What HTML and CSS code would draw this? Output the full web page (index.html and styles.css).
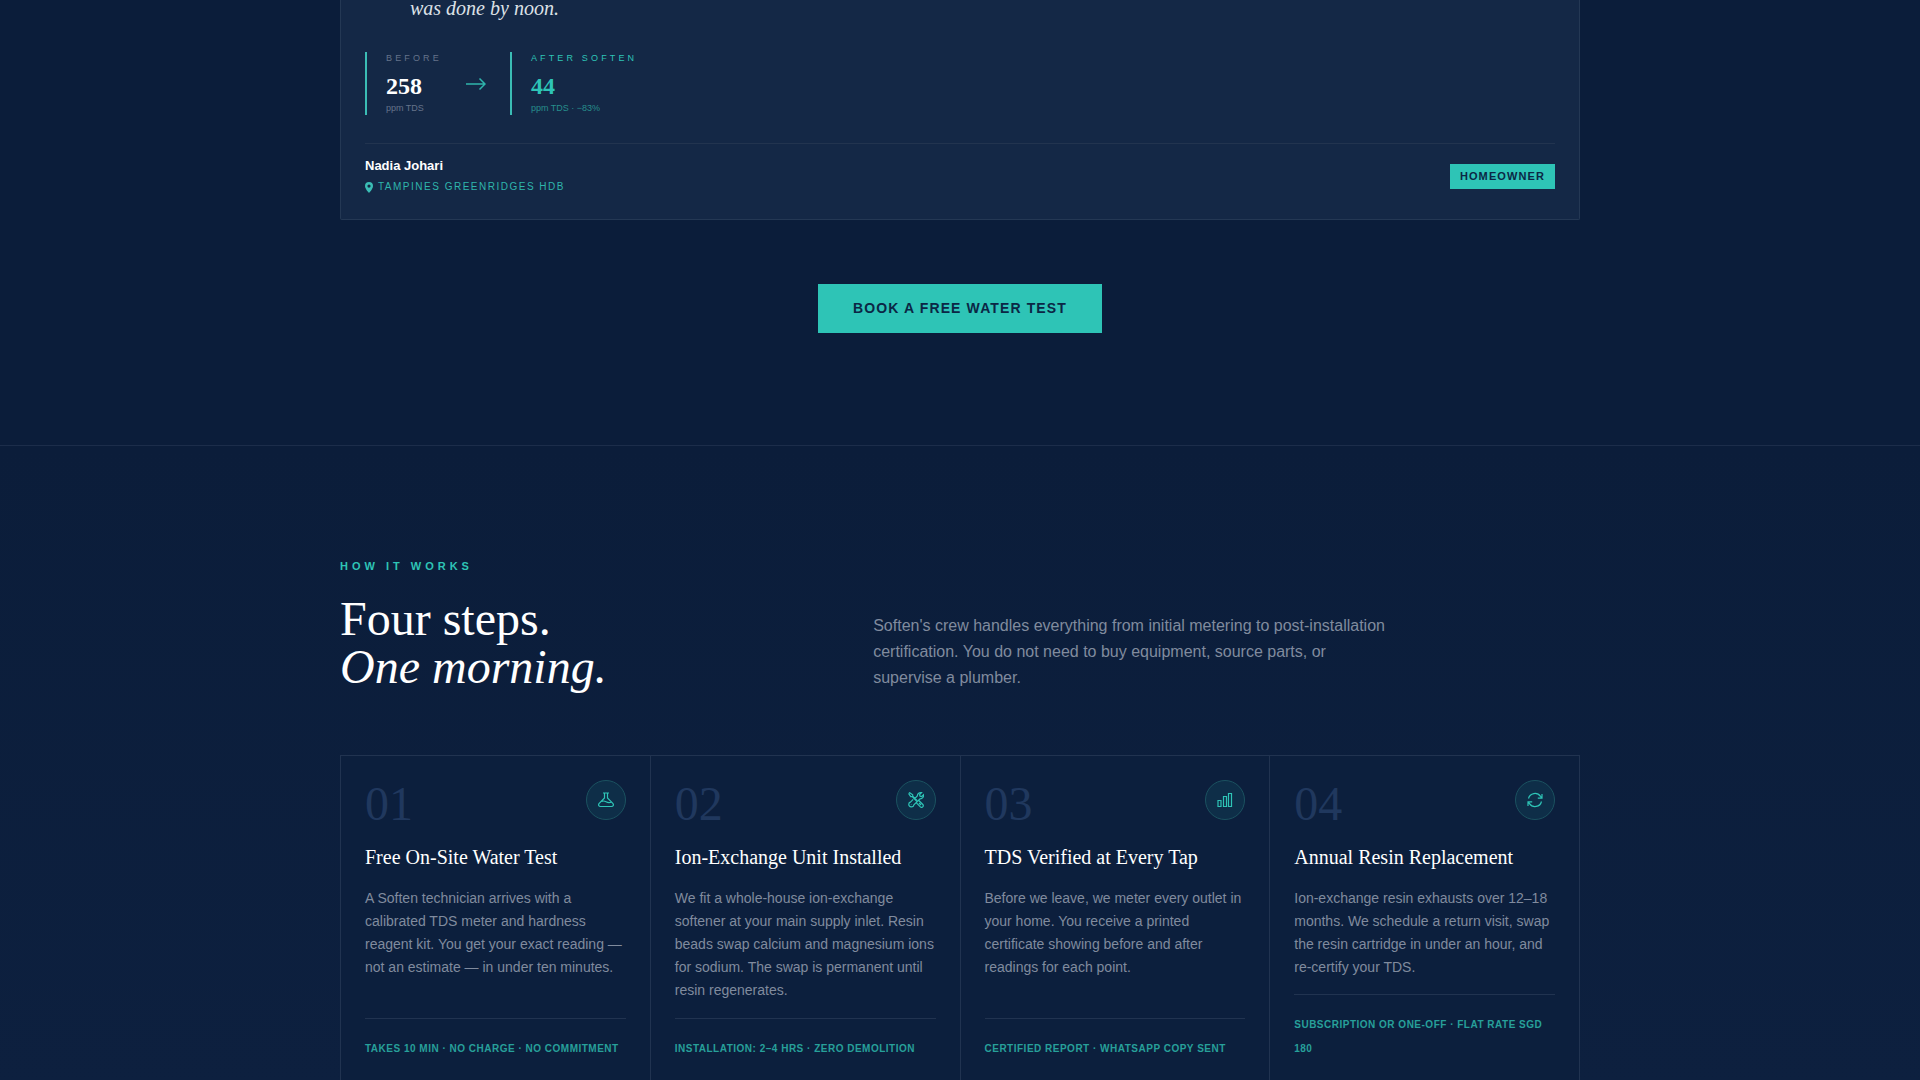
FILE: index.html
```html
<!DOCTYPE html>
<html lang="en">
<head>
    <meta charset="UTF-8">
    <meta name="viewport" content="width=device-width, initial-scale=1.0">
    <title>Soften</title>
    <link rel="stylesheet" href="styles.css">
</head>
<body>
<main class="page">
    <section class="reviews">
        <div class="container">
            <article class="review-card">
                <p class="quote">was done by noon.</p>
                <div class="readings">
                    <div class="reading">
                        <span class="reading-label">Before</span>
                        <span class="reading-value">258</span>
                        <span class="reading-unit">ppm TDS</span>
                    </div>
                    <svg class="arrow" width="20" height="20" viewBox="0 0 20 20"><path d="M0 10h19M13.5 4.500l5.500 5.500-5.500 5.500"/></svg>
                    <div class="reading after">
                        <span class="reading-label">After Soften</span>
                        <span class="reading-value">44</span>
                        <span class="reading-unit">ppm TDS · −83%</span>
                    </div>
                </div>
                <footer class="review-footer">
                    <div>
                        <div class="name">Nadia Johari</div>
                        <div class="place">
                            <svg width="8" height="11" viewBox="0 0 8 11"><path fill-rule="evenodd" d="M4 11S8 7 8 4A4 4 0 0 0 0 4c0 3 4 7 4 7zm0-5.300a1.600 1.600 0 1 1 0-3.200 1.600 1.600 0 0 1 0 3.200z"/></svg>
                            Tampines Greenridges HDB
                        </div>
                    </div>
                    <span class="tag">Homeowner</span>
                </footer>
            </article>
            <div class="cta">
                <button class="book-btn" type="button">Book a free water test</button>
            </div>
        </div>
    </section>

    <section class="how">
        <div class="container">
            <p class="eyebrow">How it works</p>
            <div class="how-header">
                <h2>Four steps.<br><em>One morning.</em></h2>
                <p class="intro">Soften's crew handles everything from initial metering to post-installation certification. You do not need to buy equipment, source parts, or supervise a plumber.</p>
            </div>
            <div class="steps">
                <article class="step">
                    <div class="step-top">
                        <span class="number">01</span>
                        <span class="icon"><svg width="16" height="16" viewBox="0 0 16 16"><path d="M5 1h6M6.500 1v5L1.200 11.300c-1.200 1.500-.5 3.200 1.300 3.200h11c1.800 0 2.500-1.700 1.300-3.200L9.500 6V1M3.500 9.500c2-1 3.200-.5 4.500.2s3 1.300 5 .5"/></svg></span>
                    </div>
                    <h3>Free On-Site Water Test</h3>
                    <p class="step-text">A Soften technician arrives with a calibrated TDS meter and hardness reagent kit. You get your exact reading — not an estimate — in under ten minutes.</p>
                    <p class="step-note">Takes 10 min · No charge · No commitment</p>
                </article>
                <article class="step">
                    <div class="step-top">
                        <span class="number">02</span>
                        <span class="icon"><svg width="16" height="16" viewBox="0 0 16 16"><path d="M.7 1.700l1-1 3 2v1.500L9 8.500M.7 1.700l2 3h1.500L8.500 9M9.800 8.800l1-.3 4 4a1.700 1.700 0 0 1-2.400 2.400l-4-4 .3-1zM11 11l2 2M6.700 6.700L9.300 4a3.500 3.500 0 0 1 4.300-3.300l-2 2 .4 1.500 1.600.4 2-2A3.500 3.500 0 0 1 12 6.800L5.900 12.900a2.600 2.600 0 1 1-3.100-3.100l2.400-2.400M3 12.700l.4-.4"/></svg></span>
                    </div>
                    <h3>Ion-Exchange Unit Installed</h3>
                    <p class="step-text">We fit a whole-house ion-exchange softener at your main supply inlet. Resin beads swap calcium and magnesium ions for sodium. The swap is permanent until resin regenerates.</p>
                    <p class="step-note">Installation: 2–4 hrs · Zero demolition</p>
                </article>
                <article class="step">
                    <div class="step-top">
                        <span class="number">03</span>
                        <span class="icon"><svg width="16" height="16" viewBox="0 0 16 16"><path d="M1 8.500h3v6H1zM6.500 4.500h3v10h-3zM11.500 1.500h3v13h-3z"/></svg></span>
                    </div>
                    <h3>TDS Verified at Every Tap</h3>
                    <p class="step-text">Before we leave, we meter every outlet in your home. You receive a printed certificate showing before and after readings for each point.</p>
                    <p class="step-note">Certified report · WhatsApp copy sent</p>
                </article>
                <article class="step">
                    <div class="step-top">
                        <span class="number">04</span>
                        <span class="icon"><svg width="16" height="16" viewBox="0 0 16 16"><path d="M1.500 6.500A6.700 6.700 0 0 1 13.500 4.300L15 6.200M15 2v4.200h-4.200M14.500 9.500A6.700 6.700 0 0 1 2.500 11.700L1 9.800M1 14V9.800h4.200"/></svg></span>
                    </div>
                    <h3>Annual Resin Replacement</h3>
                    <p class="step-text">Ion-exchange resin exhausts over 12–18 months. We schedule a return visit, swap the resin cartridge in under an hour, and re-certify your TDS.</p>
                    <p class="step-note">Subscription or one-off · Flat rate SGD 180</p>
                </article>
            </div>
        </div>
    </section>
</main>
</body>
</html>
```
FILE: styles.css
```css
* {
    box-sizing: border-box;
}
body {
    margin: 0;
    background: #0b1d3a;
    color: white;
    font-family: "Liberation Sans", Arial, sans-serif;
}
p, h2, h3 {
    margin: 0;
    font-weight: normal;
}
.page {
    height: 100vh;
    overflow: hidden;
}
.container {
    max-width: 1240px;
    margin: 0 auto;
}
.reviews {
    padding-bottom: 112px;
}
.review-card {
    background: #142846;
    border: 1px solid #243854;
    border-top: none;
    border-radius: 0 0 2px 2px;
    padding: 0 24px 24px;
}
.quote {
    padding-left: 45px;
    font-family: "Liberation Serif", "Times New Roman", serif;
    font-size: 20px;
    font-style: italic;
    line-height: 16px;
    color: #dde1e7;
}
.readings {
    display: flex;
    align-items: center;
    gap: 24px;
    margin: 36px 0 28px;
}
.reading {
    display: flex;
    flex-direction: column;
    border-left: 2px solid #3bbdb5;
    padding-left: 19px;
    height: 63px;
}
.reading-label {
    font-size: 9px;
    line-height: 12px;
    letter-spacing: 0.35em;
    text-transform: uppercase;
    color: #65738a;
}
.reading-value {
    margin-top: 10px;
    font-family: "Liberation Serif", "Times New Roman", serif;
    font-size: 24px;
    font-weight: bold;
    line-height: 24px;
}
.reading-unit {
    margin-top: 4px;
    font-size: 9px;
    line-height: 12px;
    color: #65738a;
}
.after .reading-label, .after .reading-value {
    color: #2ec4b6;
}
.after .reading-unit {
    color: #278e8c;
}
.arrow {
    fill: none;
    stroke: #2fb5ac;
    stroke-width: 1.5;
}
.review-footer {
    display: flex;
    justify-content: space-between;
    align-items: center;
    border-top: 1px solid #22344f;
    padding-top: 13px;
}
.name {
    font-size: 13px;
    font-weight: bold;
    line-height: 18px;
}
.place {
    display: flex;
    align-items: center;
    gap: 5px;
    margin-top: 4px;
    font-size: 10px;
    line-height: 16px;
    letter-spacing: 0.15em;
    text-transform: uppercase;
    color: #2fb5ac;
}
.place svg {
    fill: #3bbdb5;
}
.tag {
    background: #2ec4b6;
    color: #0b2745;
    font-size: 11px;
    font-weight: bold;
    line-height: 13px;
    letter-spacing: 0.1em;
    text-transform: uppercase;
    padding: 6px 10px;
}
.cta {
    display: flex;
    justify-content: center;
    padding-top: 64px;
}
.book-btn {
    background: #2ec4b6;
    color: #0b2745;
    border: none;
    padding: 16px 35px;
    font-family: inherit;
    font-size: 14px;
    font-weight: bold;
    line-height: 17px;
    letter-spacing: 0.08em;
    text-transform: uppercase;
    cursor: pointer;
}
.how {
    border-top: 1px solid #1c2d4a;
    padding-top: 112px;
    background: linear-gradient(#0b1d3a, #0d203f);
}
.eyebrow {
    font-size: 11px;
    font-weight: bold;
    line-height: 16px;
    letter-spacing: 4px;
    text-transform: uppercase;
    color: #2ec4b6;
}
.how-header {
    display: grid;
    grid-template-columns: 2fr 3fr;
    gap: 62px;
    align-items: end;
    margin: 21px 0 64px;
}
h2 {
    font-family: "Liberation Serif", "Times New Roman", serif;
    font-size: 48px;
    line-height: 48px;
}
.intro {
    max-width: 520px;
    font-size: 16px;
    line-height: 26px;
    color: #808b9e;
}
/* the 1px gaps show the background as dividers */
.steps {
    display: grid;
    grid-template-columns: repeat(4, 1fr);
    gap: 1px;
    background: #213350;
    border: 1px solid #213350;
}
.step {
    display: flex;
    flex-direction: column;
    background: #0c1f3d;
    padding: 24px;
}
.step-top {
    display: flex;
    justify-content: space-between;
    align-items: flex-start;
}
.number {
    font-family: "Liberation Serif", "Times New Roman", serif;
    font-size: 48px;
    line-height: 48px;
    color: #20385e;
}
.icon {
    display: flex;
    align-items: center;
    justify-content: center;
    width: 40px;
    height: 40px;
    border: 1px solid #1b5260;
    border-radius: 50%;
    background: #0e2e48;
}
.icon svg {
    fill: none;
    stroke: #2ec4b6;
    stroke-width: 1.2;
}
h3 {
    margin-top: 16px;
    font-family: "Liberation Serif", "Times New Roman", serif;
    font-size: 20px;
    line-height: 26px;
}
.step-text {
    margin: 17px 0 15px;
    font-size: 14px;
    line-height: 23px;
    color: #808b9e;
}
.step-note {
    margin-top: auto;
    border-top: 1px solid #213350;
    padding-top: 18px;
    font-size: 10px;
    font-weight: bold;
    line-height: 24px;
    letter-spacing: 0.05em;
    text-transform: uppercase;
    color: #27a09a;
}
```
